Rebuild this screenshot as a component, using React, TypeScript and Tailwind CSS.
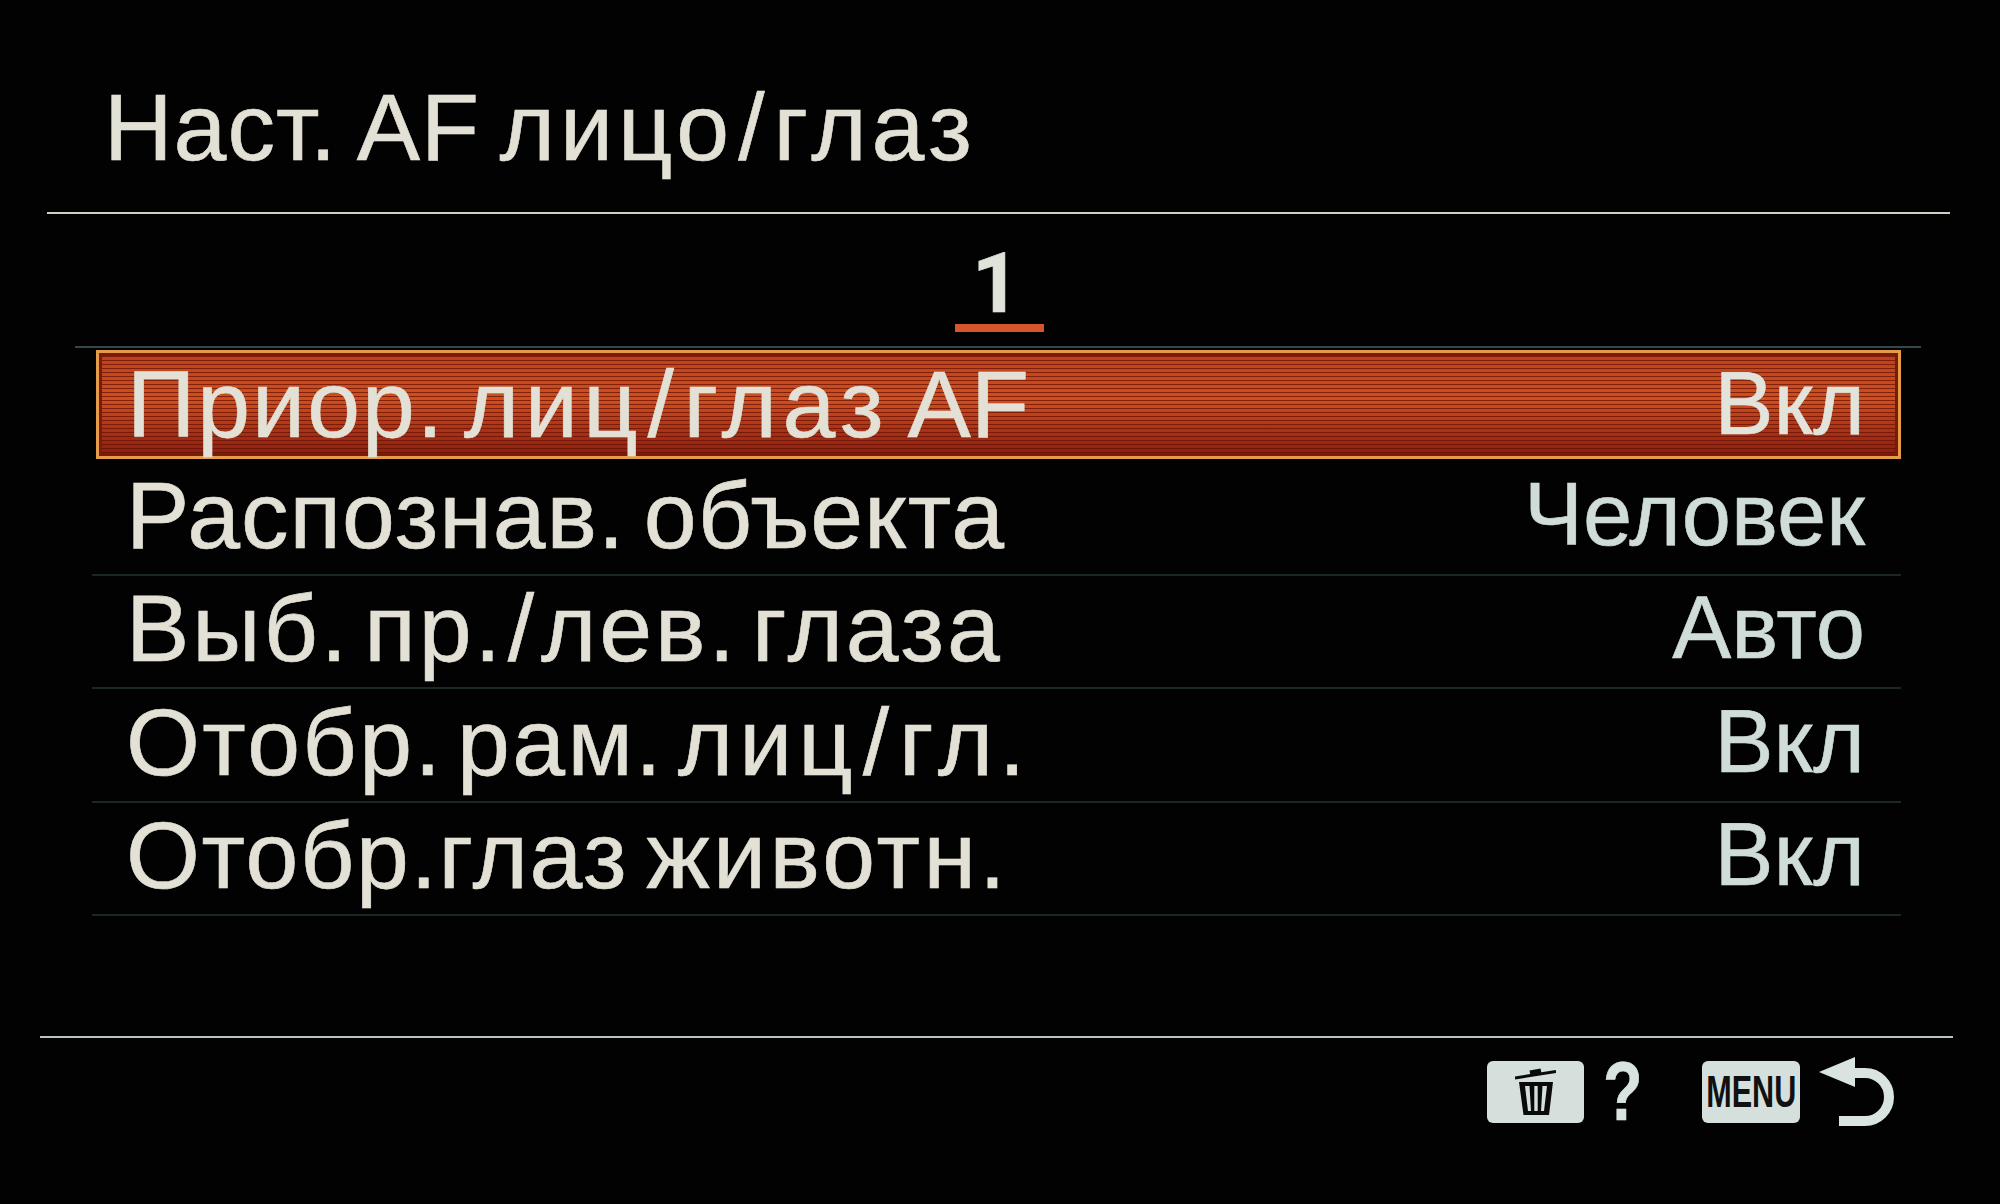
import type { ReactNode } from "react";

const Slash = () => <span className="mx-[4px]">/</span>;

const rows: { label: ReactNode; value: string; track: string }[] = [
  { label: "Распознав. объекта", value: "Человек", track: "tracking-[1px] [word-spacing:-9px]" },
  {
    label: (
      <>
        Выб. пр.
        <Slash />
        лев. глаза
      </>
    ),
    value: "Авто",
    track: "tracking-[2.9px] [word-spacing:-15px]",
  },
  {
    label: (
      <>
        Отобр. рам.{" "}
        <span className="tracking-[6px]">
          лиц
          <Slash />
          гл.
        </span>
      </>
    ),
    value: "Вкл",
    track: "tracking-[2.4px] [word-spacing:-15px]",
  },
  {
    label: (
      <>
        Отобр.глаз <span className="tracking-[3.4px]">животн.</span>
      </>
    ),
    value: "Вкл",
    track: "tracking-[1.6px] [word-spacing:-10px]",
  },
];

const TrashIcon = () => (
  <svg viewBox="0 0 41 49" className="h-[49px] w-[41px]">
    <path d="M0 11 L41 4.5" stroke="#0a0a0a" strokeWidth="3" fill="none" />
    <path d="M15 6 L26 4" stroke="#0a0a0a" strokeWidth="5" fill="none" />
    <path
      d="M4 15 H38 L34 48 H8.5 Z M10 19 L13 44 H16 L14.5 19 Z M19.3 19 V44 H22.7 V19 Z M27.5 19 L26 44 H29 L32 19 Z"
      fill="#0a0a0a"
      fillRule="evenodd"
    />
  </svg>
);

const BackArrow = () => (
  <svg viewBox="0 0 75 69" className="h-[69px] w-[75px]">
    <path d="M0 15 L36 0 V30 Z" fill="#d9e4e0" />
    <path d="M34 16 H46 A24 24 0 0 1 46 64 H20" stroke="#d9e4e0" strokeWidth="10" fill="none" />
  </svg>
);

export default function App() {
  return (
    <div className="h-[1204px] w-[2000px] overflow-hidden bg-[#020203] font-['Liberation_Sans',Arial,sans-serif] text-[#e3e1d6] [-webkit-text-stroke:0.6px]">
      <header className="ml-[47px] mr-[50px] flex h-[214px] items-start border-b-2 border-[#cfd0c4]">
        <h1 className="ml-[57px] mt-[72px] text-[95px] leading-[110px] tracking-[1px] [word-spacing:-8px]">
          Наст. AF{" "}
          <span className="tracking-[5px]">
            лицо
            <Slash />
            глаз
          </span>
        </h1>
      </header>

      <div className="ml-[75px] mr-[79px] flex h-[134px] flex-col items-center border-b-2 border-[#34474a]">
        <div className="ml-[2px] mt-[29px] flex w-[89px] flex-col items-center border-b-[8px] border-[#d6552a]">
          <span className="mr-[6px] font-['Roboto',sans-serif] text-[84px] leading-[81px] font-bold text-[#dfe3da]">1</span>
        </div>
      </div>

      <main className="ml-[92px] mr-[99px] mt-[2px]">
        <div className="ml-[4px] border-[3px] border-[#e49c48]">
          <div className="flex h-[103px] items-center justify-between border-[3px] border-[#7c1a0a] bg-[repeating-linear-gradient(180deg,rgba(100,14,5,0.7)_0px,rgba(100,14,5,0.7)_1px,transparent_1px,transparent_4px),linear-gradient(180deg,#bc421a_0%,#cf4f1d_45%,#ac3414_75%,#8c2010_100%)] pb-[2px] pl-[25px] pr-[30px]">
            <span className="text-[95px] leading-[100px] tracking-[2px] [word-spacing:-10px]">
              Приор.{" "}
              <span className="tracking-[5.6px]">
                лиц
                <Slash />
                глаз
              </span>{" "}
              <span className="tracking-[0px]">AF</span>
            </span>
            <span className="text-[88.5px] leading-[100px] text-[#e2e4dc]">Вкл</span>
          </div>
        </div>
        <div className="mt-[3px]">
          {rows.map((r, i) => (
            <div
              key={i}
              className="flex h-[113.5px] items-center justify-between border-b-2 border-[#1c2628] pb-[6px] pl-[34px] pr-[36px]"
            >
              <span className={`text-[95px] leading-[100px] ${r.track}`}>{r.label}</span>
              <span className="text-[88.5px] leading-[100px] text-[#cfdcd8]">{r.value}</span>
            </div>
          ))}
        </div>
      </main>

      <footer className="ml-[40px] mr-[47px] mt-[120px] border-t-2 border-[#b7c6c2]">
        <div className="mt-[19px] flex items-center justify-end pr-[59px]">
          <div className="flex h-[62px] w-[97px] items-center justify-center rounded-[6px] bg-[#d5e0dc]">
            <TrashIcon />
          </div>
          <span className="ml-[19px] inline-block w-[99px] origin-left scale-x-[0.78] text-[83px] leading-[62px] font-bold text-[#d9e4e0]">
            ?
          </span>
          <div className="flex h-[62px] w-[98px] items-center justify-center rounded-[6px] bg-[#d5e0dc]">
            <span className="scale-x-[0.68] text-[45px] leading-none font-bold text-[#111] [-webkit-text-stroke:0px]">MENU</span>
          </div>
          <div className="ml-[19px]">
            <BackArrow />
          </div>
        </div>
      </footer>
    </div>
  );
}
